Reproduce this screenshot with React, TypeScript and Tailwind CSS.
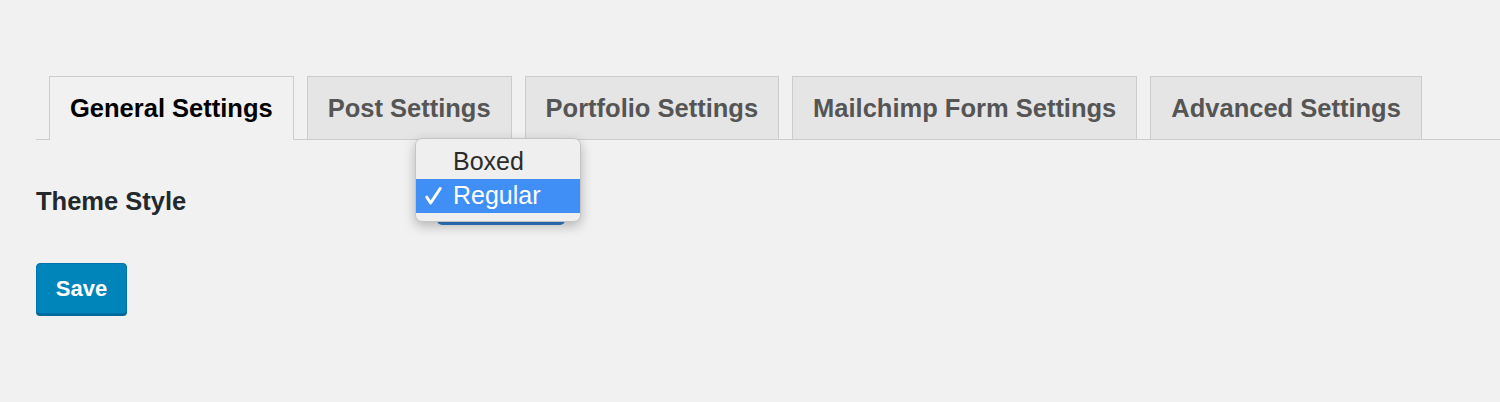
const tabs = [
  { label: "General Settings", active: true },
  { label: "Post Settings", active: false },
  { label: "Portfolio Settings", active: false },
  { label: "Mailchimp Form Settings", active: false },
  { label: "Advanced Settings", active: false },
];

export default function App() {
  return (
    <div className="min-h-screen bg-[#f1f1f1] pl-[36px] pt-[76px] font-['Liberation_Sans',Arial,sans-serif]">
      {/* tab strip */}
      <nav className="flex gap-[13px] border-b border-[#cccccc] pl-[13px]">
        {tabs.map(tab =>
          tab.active ? (
            <div
              key={tab.label}
              className="-mb-px flex h-[64px] items-center border border-b-0 border-[#cccccc] bg-[#f1f1f1] px-[20px] text-[25.5px] font-bold text-black"
            >
              {tab.label}
            </div>
          ) : (
            <div
              key={tab.label}
              className="flex h-[63px] items-center border border-b-0 border-[#cccccc] bg-[#e5e5e5] px-[20px] text-[25.5px] font-bold text-[#555555]"
            >
              {tab.label}
            </div>
          )
        )}
      </nav>

      {/* theme style row */}
      <div className="mt-[46px] flex h-[30px] items-center">
        <div className="w-[379px] text-[25.5px] font-bold leading-[30px] text-[#23282d]">Theme Style</div>
        <div className="relative h-[30px] w-[166px]">
          <div className="absolute left-[22px] top-[5px] h-[34px] w-[128px] rounded-[5px] bg-[#2f7bc9]" />
          <div className="absolute -top-[48px] left-0 w-[166px] rounded-[7px] border border-[#c4c4c4] bg-[#efefef] pb-[8px] pt-[6px] shadow-[0_4px_12px_rgba(0,0,0,0.25)]">
            <div className="flex h-[34px] items-center pl-[37px] text-[25px] text-[#2b2b2b]">Boxed</div>
            <div className="flex h-[34px] items-center bg-[#3f8ff6] text-[25px] text-white">
              <span className="flex w-[37px] justify-start pl-[9px]">
                <svg width="17" height="18" viewBox="0 0 17 18" fill="none">
                  <path d="M1.8 10.2 L5.6 16 L15.2 1.5" stroke="white" strokeWidth="3" strokeLinecap="round" strokeLinejoin="round" />
                </svg>
              </span>
              Regular
            </div>
          </div>
        </div>
      </div>

      {/* save */}
      <button className="mt-[47px] flex h-[51px] w-[91px] items-center justify-center rounded-[4px] border border-[#0073aa] bg-[#0085ba] text-[22px] font-bold text-white shadow-[0_2px_0_#006799]">
        Save
      </button>
    </div>
  );
}
